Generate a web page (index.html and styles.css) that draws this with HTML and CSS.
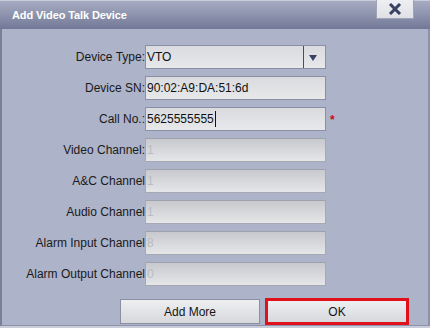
FILE: index.html
```html
<!DOCTYPE html>
<html>
<head>
<meta charset="utf-8">
<link rel="stylesheet" href="styles.css">
</head>
<body>
<div class="dialog">
  <div class="titlebar">
    <span class="title">Add Video Talk Device</span>
    <div class="close">
      <svg width="14" height="12" viewBox="0 0 14 12"><path d="M2 1 L12 11 M12 1 L2 11" stroke="#3b4163" stroke-width="3" stroke-linecap="butt"/></svg>
    </div>
  </div>
  <div class="form">
    <div class="label">Device Type:</div>
    <div class="field select"><span class="val">VTO</span><span class="sep"></span><span class="arrow"></span></div>
    <div class="extra"></div>

    <div class="label">Device SN:</div>
    <div class="field"><span class="val">90:02:A9:DA:51:6d</span></div>
    <div class="extra"></div>

    <div class="label">Call No.:</div>
    <div class="field"><span class="val">5625555555</span><span class="caret"></span></div>
    <div class="extra star">*</div>

    <div class="label">Video Channel:</div>
    <div class="field off"><span class="val">1</span></div>
    <div class="extra"></div>

    <div class="label">A&amp;C Channel</div>
    <div class="field off"><span class="val">1</span></div>
    <div class="extra"></div>

    <div class="label">Audio Channel</div>
    <div class="field off"><span class="val">1</span></div>
    <div class="extra"></div>

    <div class="label">Alarm Input Channel</div>
    <div class="field off"><span class="val">8</span></div>
    <div class="extra"></div>

    <div class="label">Alarm Output Channel</div>
    <div class="field off"><span class="val">0</span></div>
    <div class="extra"></div>
  </div>
  <div class="buttons">
    <div class="btn add">Add More</div>
    <div class="okwrap"><div class="btn ok">OK</div></div>
  </div>
</div>
</body>
</html>
```
FILE: styles.css
```css
html, body {
  margin: 0;
  padding: 0;
  background: #c9cdd9;
}
body {
  width: 430px;
  height: 328px;
  overflow: hidden;
  font-family: "Liberation Sans", Arial, sans-serif;
}
.dialog {
  width: 430px;
  height: 326px;
  box-sizing: border-box;
  background: #adb3c9;
  border-left: 2px solid #7b8099;
  border-right: 2px solid #8d92aa;
  border-bottom: 1px solid #8d92aa;
  display: flex;
  flex-direction: column;
}
.titlebar {
  height: 29px;
  flex: none;
  box-sizing: border-box;
  border-top: 1px solid #c8ccda;
  background: linear-gradient(#a6abc2, #8d93ad 50%, #717896);
  display: flex;
  align-items: flex-start;
  margin-left: -2px;
  margin-right: -2px;
  padding-left: 12px;
}
.title {
  color: #ffffff;
  font-weight: bold;
  font-size: 11px;
  line-height: 29px;
  letter-spacing: -0.1px;
}
.close {
  margin-left: auto;
  margin-right: 16px;
  margin-top: -1px;
  width: 38px;
  height: 19px;
  box-sizing: border-box;
  background: linear-gradient(#eeeff2, #dfe1e6);
  border: 1px solid #9ea3b8;
  border-top: none;
  display: flex;
  align-items: center;
  justify-content: center;
}
.close svg {
  display: block;
}
.form {
  display: grid;
  grid-template-columns: 143px 181px 20px;
  grid-auto-rows: 24px;
  row-gap: 7px;
  padding-top: 16px;
}
.label {
  text-align: right;
  font-size: 12px;
  color: #1a1a1a;
  line-height: 24px;
  white-space: nowrap;
}
.field {
  box-sizing: border-box;
  height: 24px;
  border: 1px solid #8a8fa6;
  background: linear-gradient(#d9dbdf, #e7e8ea);
  display: flex;
  align-items: center;
  position: relative;
}
.field.off {
  border: 1px solid #a6a9b4;
  border-top-color: #9ea2ad;
  background: linear-gradient(#c7c9ce, #e5e6e8);
}
.val {
  font-size: 12px;
  color: #111;
  padding-left: 1px;
  white-space: nowrap;
}
.field.off .val {
  color: #b9bbc1;
}
.caret {
  width: 1px;
  height: 16px;
  background: #111;
  margin-left: 1px;
}
.select .sep {
  margin-left: auto;
  width: 1px;
  height: 22px;
  background: #4a4d5a;
  margin-right: 21px;
  position: relative;
}
.select .arrow {
  position: absolute;
  right: 8px;
  top: 9px;
  width: 0;
  height: 0;
  border-left: 4px solid transparent;
  border-right: 4px solid transparent;
  border-top: 6px solid #3b4163;
}
.extra {
  line-height: 24px;
}
.star {
  color: #c8101a;
  font-size: 12px;
  font-weight: bold;
  padding-left: 4px;
  line-height: 26px;
}
.buttons {
  display: flex;
  align-items: flex-end;
  margin-top: 12px;
  padding-left: 118px;
}
.btn {
  box-sizing: border-box;
  height: 25px;
  font-size: 12px;
  color: #151515;
  display: flex;
  align-items: center;
  justify-content: center;
  background: linear-gradient(#eeeff1, #d6d8dc);
}
.add {
  width: 140px;
  border: 1px solid #8a8fa6;
  margin-bottom: 1px;
}
.okwrap {
  margin-left: 5px;
  width: 144px;
  height: 27px;
  box-sizing: border-box;
  border: 3px solid #e0111a;
}
.ok {
  width: 100%;
  height: 100%;
}
```
